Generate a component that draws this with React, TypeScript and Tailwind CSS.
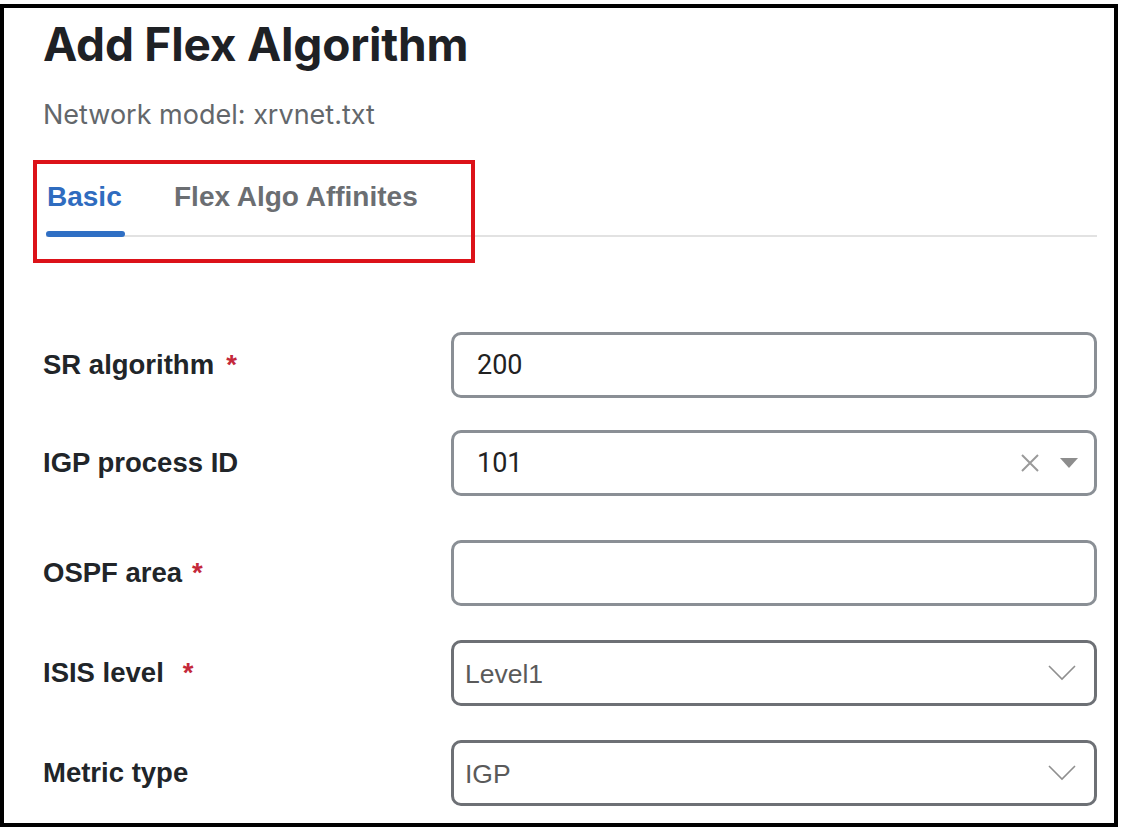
import React from "react";

const Req = ({ gap = "ml-[12px]" }: { gap?: string }) => (
  <span className={`${gap} text-[#c4283a]`}>*</span>
);

const Field = ({
  label,
  required,
  reqGap,
  className = "",
  children,
}: {
  label: string;
  required?: boolean;
  reqGap?: string;
  className?: string;
  children: React.ReactNode;
}) => (
  <div className={`grid grid-cols-[408px_1fr] items-center ${className}`}>
    <div className="font-['Liberation_Sans',Arial,sans-serif] text-[27.5px] font-bold leading-none text-[#212529]">
      {label}
      {required && <Req gap={reqGap} />}
    </div>
    {children}
  </div>
);

const XIcon = () => (
  <svg width="20" height="20" viewBox="0 0 20 20" className="shrink-0">
    <path d="M2 2 L18 18 M18 2 L2 18" stroke="#9a9a9a" strokeWidth="2" fill="none" />
  </svg>
);

const Caret = () => (
  <svg width="18" height="10" viewBox="0 0 18 10" className="shrink-0">
    <path d="M0 0 H18 L9 10 Z" fill="#8d8d8d" />
  </svg>
);

const Chevron = () => (
  <svg width="28" height="16" viewBox="0 0 28 16" className="shrink-0">
    <path d="M1 1 L14 14 L27 1" stroke="#8f8f8f" strokeWidth="1.6" fill="none" />
  </svg>
);

export default function App() {
  return (
    <div className="w-[1122px] h-[834px] bg-white overflow-hidden">
      <div className="mt-[4px] w-[1118px] h-[823px] border-4 border-black bg-white pl-[39px] pr-[17px] pt-[13px]">
        <h1 className="font-['Inter',sans-serif] text-[46px] font-bold leading-none text-[#1e2125] tracking-[-0.2px]">
          Add Flex Algorithm
        </h1>
        <p className="mt-[34px] font-['Inter',sans-serif] text-[27px] leading-none text-[#63676b]">
          Network model: xrvnet.txt
        </p>

        <div className="relative mt-[55px] ml-[3px] flex border-b-2 border-[#e2e2e2] font-['Liberation_Sans',Arial,sans-serif] text-[28px] font-bold leading-none">
          <div className="relative w-[79px] pb-[24px] pl-[1px] text-[#2f6cbf]">
            Basic
            <span className="absolute left-0 right-0 bottom-[-2px] h-[6px] rounded-full bg-[#2f6fc4]" />
          </div>
          <div className="ml-[49px] pb-[24px] text-[#6b6e72]">Flex Algo Affinites</div>
          <div className="absolute left-[-13px] top-[-23px] w-[442px] h-[103px] border-4 border-[#dc1219]" />
        </div>

        <Field label="SR algorithm" required className="mt-[95px]">
          <div className="flex h-[66px] items-center rounded-[10px] border-[3px] border-[#8a8f95] pl-[23px] font-['Roboto',sans-serif] text-[27px] text-[#222]">
            200
          </div>
        </Field>

        <Field label="IGP process ID" className="mt-[32px]">
          <div className="flex h-[66px] items-center rounded-[10px] border-[3px] border-[#8a8f95] pl-[23px] pr-[16px] font-['Roboto',sans-serif] text-[27px] text-[#222]">
            <span className="flex-1">101</span>
            <XIcon />
            <span className="ml-[20px]">
              <Caret />
            </span>
          </div>
        </Field>

        <Field label="OSPF area" required reqGap="ml-[10px]" className="mt-[44px]">
          <div className="h-[66px] rounded-[10px] border-[3px] border-[#8a8f95]" />
        </Field>

        <Field label="ISIS level" required reqGap="ml-[19px]" className="mt-[34px]">
          <div className="flex h-[66px] items-center rounded-[10px] border-[3px] border-[#6d7075] pl-[11px] pr-[18px] font-['Liberation_Sans',Arial,sans-serif] text-[26.5px] text-[#5a5a5a]">
            <span className="flex-1 pt-[4px]">Level1</span>
            <Chevron />
          </div>
        </Field>

        <Field label="Metric type" className="mt-[34px]">
          <div className="flex h-[66px] items-center rounded-[10px] border-[3px] border-[#6d7075] pl-[11px] pr-[18px] font-['Liberation_Sans',Arial,sans-serif] text-[26.5px] text-[#5a5a5a]">
            <span className="flex-1 pt-[4px]">IGP</span>
            <Chevron />
          </div>
        </Field>
      </div>
    </div>
  );
}
